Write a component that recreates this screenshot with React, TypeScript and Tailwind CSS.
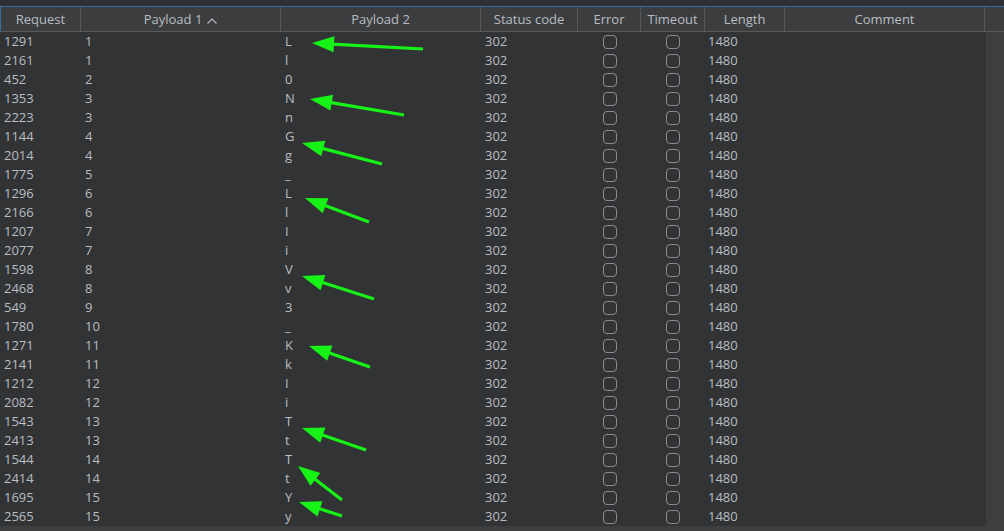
import React from "react";

type Row = [string, string, string];

const rows: Row[] = [
  ["1291", "1", "L"],
  ["2161", "1", "l"],
  ["452", "2", "0"],
  ["1353", "3", "N"],
  ["2223", "3", "n"],
  ["1144", "4", "G"],
  ["2014", "4", "g"],
  ["1775", "5", "_"],
  ["1296", "6", "L"],
  ["2166", "6", "l"],
  ["1207", "7", "I"],
  ["2077", "7", "i"],
  ["1598", "8", "V"],
  ["2468", "8", "v"],
  ["549", "9", "3"],
  ["1780", "10", "_"],
  ["1271", "11", "K"],
  ["2141", "11", "k"],
  ["1212", "12", "I"],
  ["2082", "12", "i"],
  ["1543", "13", "T"],
  ["2413", "13", "t"],
  ["1544", "14", "T"],
  ["2414", "14", "t"],
  ["1695", "15", "Y"],
  ["2565", "15", "y"],
];

const arrows: [number, number, number, number][] = [
  [312, 43, 423, 49],
  [310, 99, 404, 115],
  [302, 143, 382, 164],
  [305, 198, 369, 222],
  [302, 276, 374, 299],
  [309, 346, 370, 367],
  [302, 428, 366, 450],
  [298, 466, 342, 500],
  [299, 502, 342, 516],
];

function Arrow({ a }: { a: [number, number, number, number] }) {
  const [tx, ty, ex, ey] = a;
  const dx = ex - tx;
  const dy = ey - ty;
  const len = Math.sqrt(dx * dx + dy * dy);
  const ux = dx / len;
  const uy = dy / len;
  const hl = 22;
  const hw = 8;
  const bx = tx + ux * hl;
  const by = ty + uy * hl;
  const px = -uy;
  const py = ux;
  const pts = `${tx},${ty} ${bx + px * hw},${by + py * hw} ${bx - px * hw},${by - py * hw}`;
  return (
    <g>
      <line x1={bx - ux * 2} y1={by - uy * 2} x2={ex} y2={ey} stroke="#17f317" strokeWidth={3.2} strokeLinecap="butt" />
      <polygon points={pts} fill="#17f317" />
    </g>
  );
}

function Check() {
  return <div className="w-[14px] h-[14px] rounded-[4px] border border-[#8a8c8f]" />;
}

function HeaderCell({ w, children, first }: { w: string; children: React.ReactNode; first?: boolean }) {
  return (
    <div
      className={`${w} h-full flex items-center justify-center pt-[2px] border-r border-[#56585a] ${first ? "border-l border-l-[#3d6aa0]" : ""}`}
    >
      {children}
    </div>
  );
}

export default function App() {
  return (
    <div
      className="relative w-[1004px] h-[531px] overflow-hidden bg-[#3c3e40] flex flex-col text-[13px] text-[#babdc2]"
      style={{ fontFamily: '"Open Sans", "Noto Sans", sans-serif' }}
    >
      <div className="h-[6px] bg-[#2e3033] shrink-0" />
      <div className="h-px bg-[#3d6aa0] shrink-0" />
      <div className="h-[25px] shrink-0 flex bg-[#3b3d3f] border-b border-[#56585a]">
        <HeaderCell w="w-[81px]" first>Request</HeaderCell>
        <HeaderCell w="w-[200px]">
          <span className="flex items-center gap-[5px]">
            Payload 1
            <svg width="10" height="6" viewBox="0 0 10 6" className="mt-[1px]">
              <path d="M0.5 5.5 L5 1 L9.5 5.5" fill="none" stroke="#babdc2" strokeWidth="1.1" />
            </svg>
          </span>
        </HeaderCell>
        <HeaderCell w="w-[200px]">Payload 2</HeaderCell>
        <HeaderCell w="w-[97px]">Status code</HeaderCell>
        <HeaderCell w="w-[63px]">Error</HeaderCell>
        <HeaderCell w="w-[64px]">Timeout</HeaderCell>
        <HeaderCell w="w-[80px]">Length</HeaderCell>
        <HeaderCell w="w-[200px]">Comment</HeaderCell>
        <div className="flex-1" />
      </div>
      <div className="w-[986px] bg-[#313335] flex flex-col">
        {rows.map((r, i) => (
          <div key={i} className="h-[19px] flex items-center leading-[19px]">
            <div className="w-[81px] pl-[4px]">{r[0]}</div>
            <div className="w-[200px] pl-[4px]">{r[1]}</div>
            <div className="w-[200px] pl-[4px]">{r[2]}</div>
            <div className="w-[97px] pl-[4px]">302</div>
            <div className="w-[63px] flex justify-center">
              <Check />
            </div>
            <div className="w-[64px] flex justify-center">
              <Check />
            </div>
            <div className="w-[80px] pl-[3px]">1480</div>
            <div className="w-[201px]" />
          </div>
        ))}
      </div>
      <svg className="absolute inset-0 pointer-events-none" width="1004" height="531">
        {arrows.map((a, i) => (
          <Arrow key={i} a={a} />
        ))}
      </svg>
    </div>
  );
}
